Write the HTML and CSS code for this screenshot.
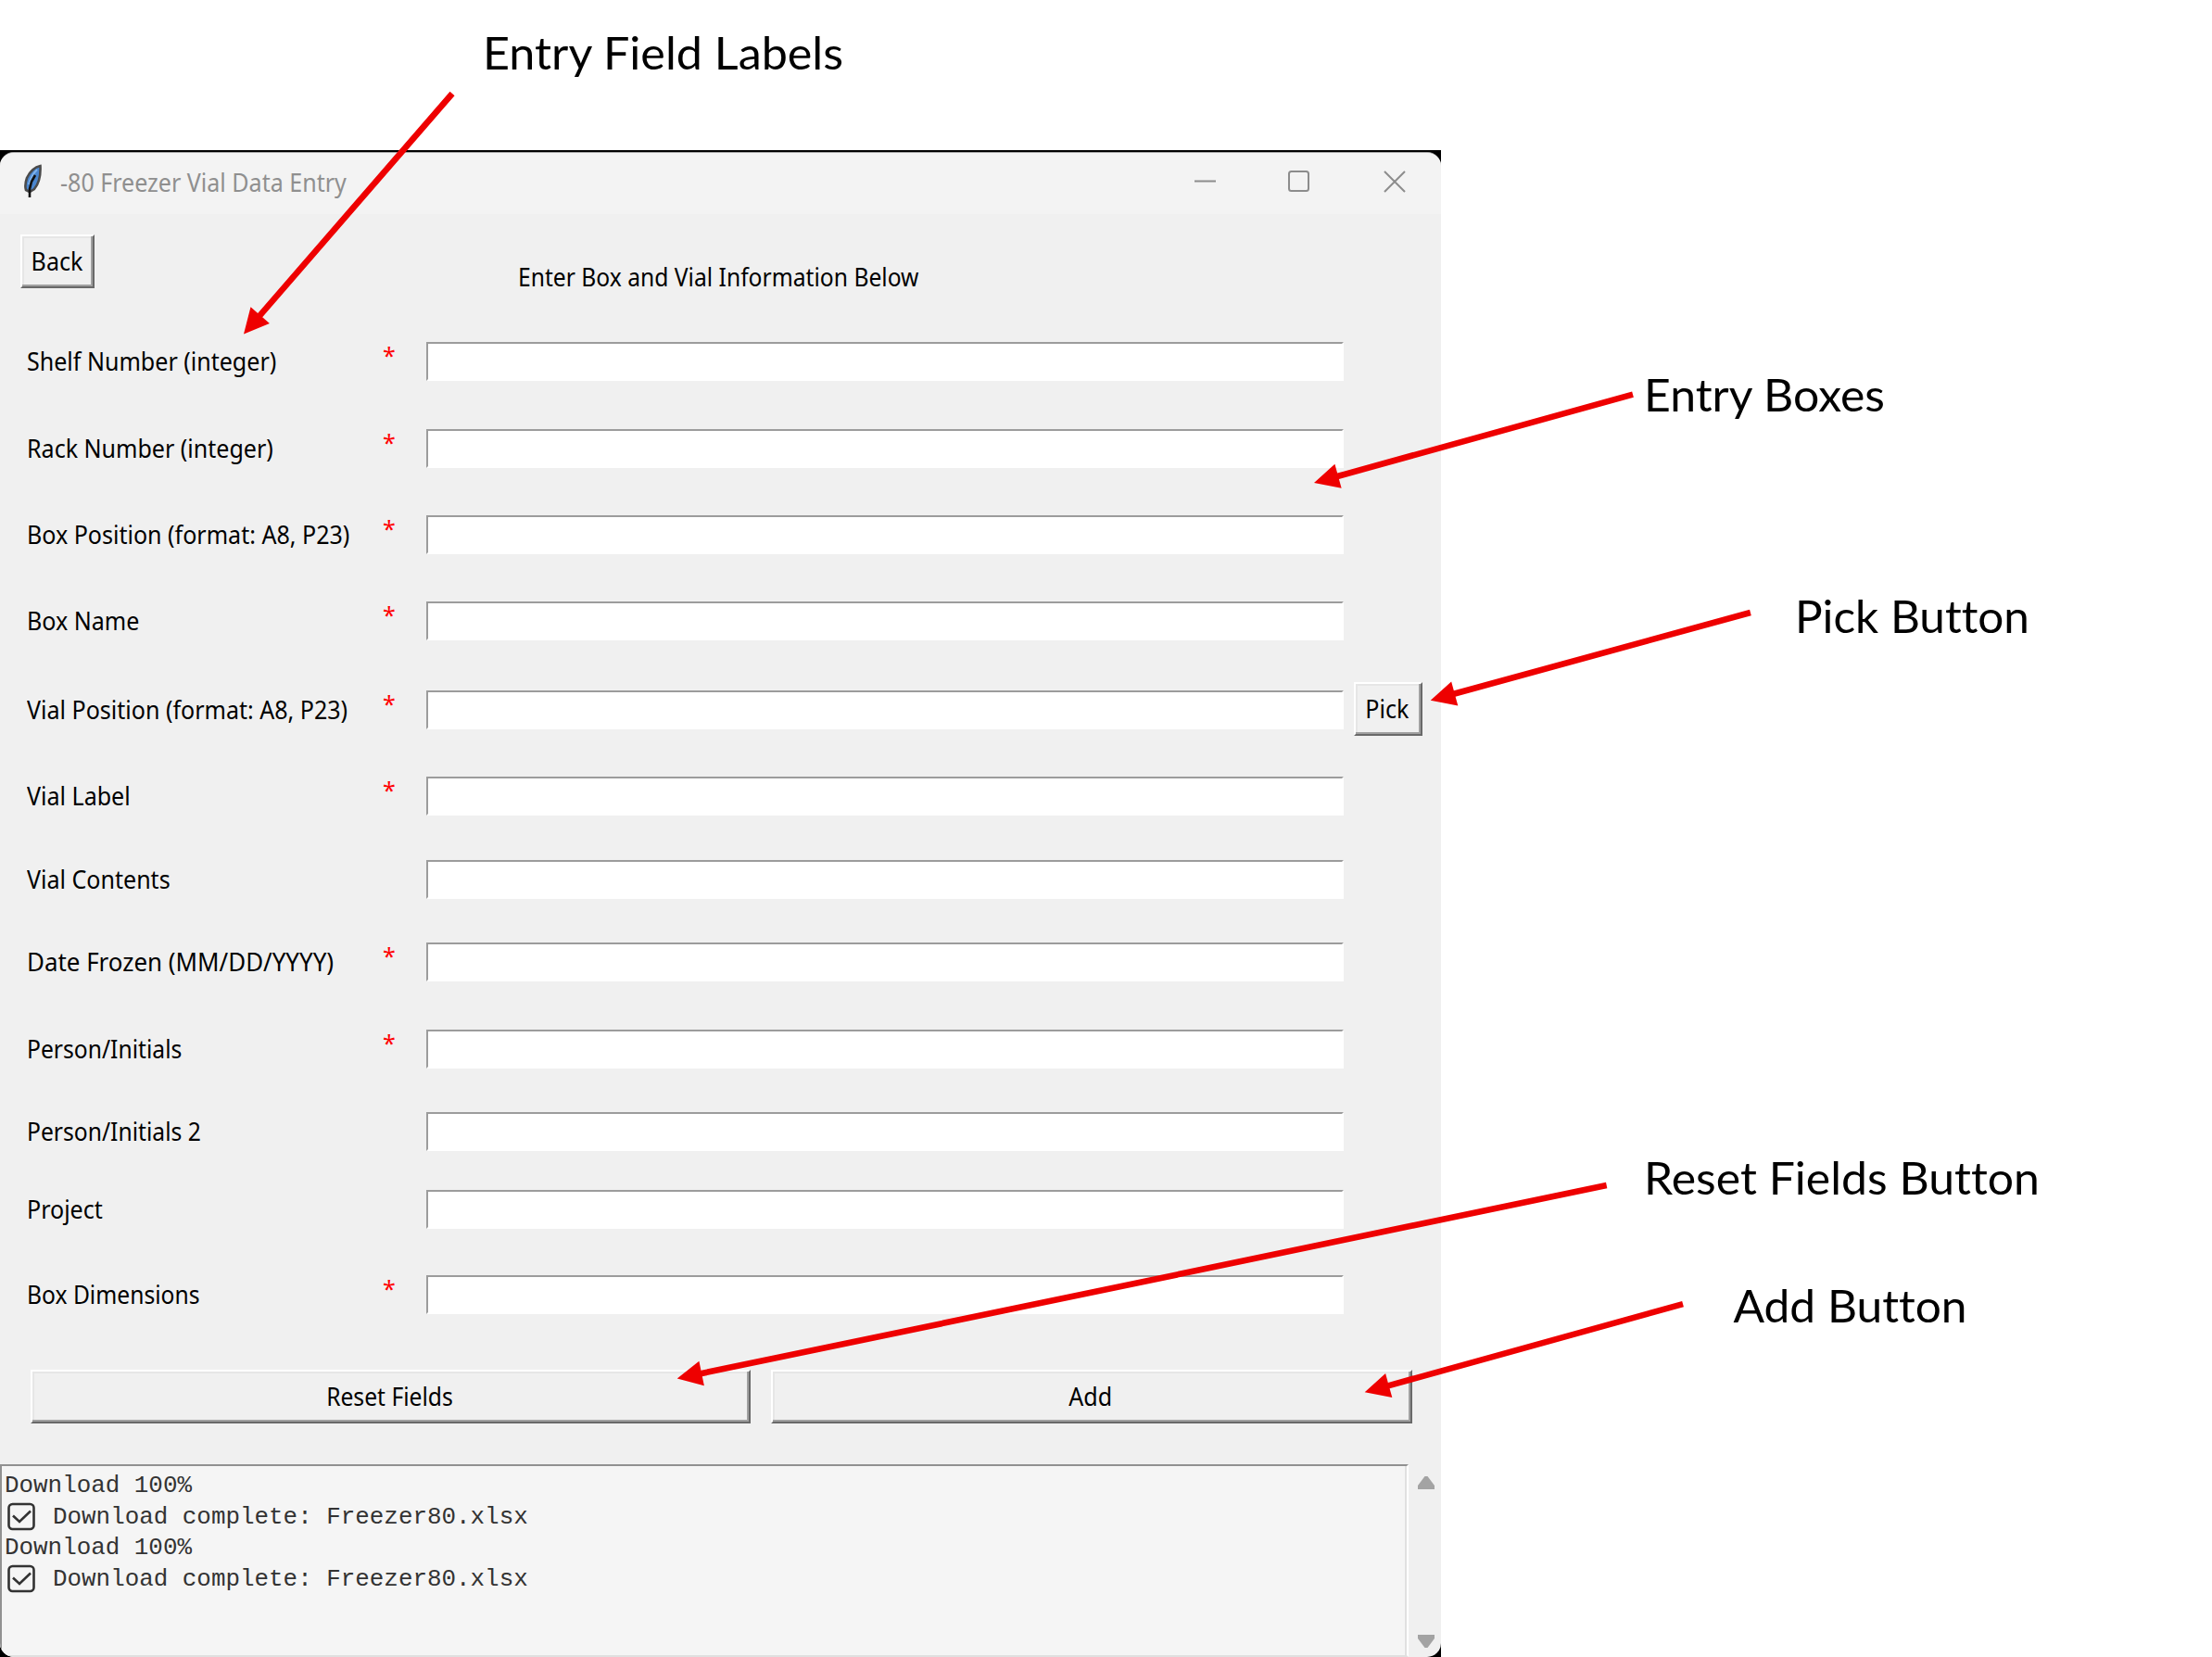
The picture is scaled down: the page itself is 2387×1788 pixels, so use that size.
FILE: index.html
```html
<!DOCTYPE html>
<html lang="en">
<head>
<meta charset="utf-8">
<title>-80 Freezer Vial Data Entry</title>
<link rel="stylesheet" href="styles.css">
</head>
<body>
<div class="backdrop">
<main class="window">
  <header class="titlebar">
    <svg class="feather" width="22" height="38" viewBox="0 0 22 38">
      <path d="M18.500 2C13 3 7 8 4 15C2 21 2 25 3 28L7 30L12 27C17 21 19 12 18.500 2Z" fill="#4a86cf" stroke="#4b4b4b" stroke-width="2.600"/>
      <path d="M15 6C11 10 8 15 6 22" fill="none" stroke="#7fb2ea" stroke-width="2"/>
      <path d="M13 12L9 19L7 27V36" fill="none" stroke="#111" stroke-width="2.600"/>
    </svg>
    <span class="title"><span class="cond">-80 Freezer Vial Data Entry</span></span>
    <svg class="controls" width="230" height="26" viewBox="0 0 230 26" fill="none" stroke="#8c8c8c" stroke-width="2">
      <path d="M1 12.500H24"/>
      <rect x="103" y="2" width="21" height="21" rx="2.500"/>
      <path d="M206 2L228 24M228 2L206 24"/>
    </svg>
  </header>
  <section class="top">
    <button class="btn back"><span class="cond">Back</span></button>
    <h1 class="heading"><span class="cond tight">Enter Box and Vial Information Below</span></h1>
  </section>
  <form class="form">
    <label><span class="cond">Shelf Number (integer)</span></label><i>*</i><input>
    <label><span class="cond">Rack Number (integer)</span></label><i>*</i><input>
    <label><span class="cond">Box Position (format: A8, P23)</span></label><i>*</i><input>
    <label><span class="cond">Box Name</span></label><i>*</i><input>
    <label><span class="cond">Vial Position (format: A8, P23)</span></label><i>*</i><input><button type="button" class="btn pick"><span class="cond">Pick</span></button>
    <label><span class="cond">Vial Label</span></label><i>*</i><input>
    <label><span class="cond">Vial Contents</span></label><input>
    <label><span class="cond wide">Date Frozen (MM/DD/YYYY)</span></label><i>*</i><input>
    <label><span class="cond tight">Person/Initials</span></label><i>*</i><input>
    <label><span class="cond tight">Person/Initials 2</span></label><input>
    <label><span class="cond">Project</span></label><input>
    <label><span class="cond tight">Box Dimensions</span></label><i>*</i><input>
  </form>
  <div class="actions">
    <button class="btn reset"><span class="cond tight">Reset Fields</span></button>
    <button class="btn add"><span class="cond">Add</span></button>
  </div>
  <section class="console">
    <div class="log">
      <p>Download 100%</p>
      <p><svg class="check" width="32" height="32" viewBox="0 0 32 32"><rect x="2.500" y="2" width="27" height="27" rx="4"/><path d="M7 14.500L14 21L26 9.500"/></svg>Download complete: Freezer80.xlsx</p>
      <p>Download 100%</p>
      <p><svg class="check" width="32" height="32" viewBox="0 0 32 32"><rect x="2.500" y="2" width="27" height="27" rx="4"/><path d="M7 14.500L14 21L26 9.500"/></svg>Download complete: Freezer80.xlsx</p>
    </div>
    <div class="scrollbar">
      <svg width="18" height="14" viewBox="0 0 18 14"><path d="M7.500 0H10.500L18 10V14H0V10Z"/></svg>
      <svg width="18" height="14" viewBox="0 0 18 14"><path d="M7.500 14H10.500L18 4V0H0V4Z"/></svg>
    </div>
  </section>
</main>
</div>
<svg class="callouts" width="2387" height="1788" viewBox="0 0 2387 1788">
  <g class="arrows">
    <path transform="translate(263 360.500) rotate(-49.070)" d="M0 0L27 -13.500V-3.300H343.500V3.300H27V13.500Z"/>
    <path transform="translate(1418 521) rotate(-15.500)" d="M0 0L27 -13.500V-3.300H357V3.300H27V13.500Z"/>
    <path transform="translate(1543.700 755.700) rotate(-15.340)" d="M0 0L27 -13.500V-3.300H358V3.300H27V13.500Z"/>
    <path transform="translate(730.700 1487.500) rotate(-11.740)" d="M0 0L27 -13.500V-3.300H1024.400V3.300H27V13.500Z"/>
    <path transform="translate(1472.700 1502.300) rotate(-15.500)" d="M0 0L27 -13.500V-3.300H356.300V3.300H27V13.500Z"/>
  </g>
  <g class="notes">
    <text x="521" y="74.500" textLength="389" lengthAdjust="spacingAndGlyphs">Entry Field Labels</text>
    <text x="1774" y="444" textLength="260" lengthAdjust="spacingAndGlyphs">Entry Boxes</text>
    <text x="1937" y="683" textLength="253" lengthAdjust="spacingAndGlyphs">Pick Button</text>
    <text x="1774" y="1288.500" textLength="427" lengthAdjust="spacingAndGlyphs">Reset Fields Button</text>
    <text x="1870.500" y="1427" textLength="252" lengthAdjust="spacingAndGlyphs">Add Button</text>
  </g>
</svg>
</body>
</html>
```
FILE: styles.css
```css
* { box-sizing: border-box; }
body {
  margin: 0;
  height: 1788px;
  overflow: hidden;
  background: #fff;
  font-family: "Noto Sans", sans-serif;
  font-size: 26.5px;
  color: #000;
}
.backdrop {
  width: 1555px;
  height: 1626px;
  margin-top: 162px;
  padding-top: 2px;
  background: #000;
}
.window {
  display: flex;
  flex-direction: column;
  height: 1624px;
  background: #f0f0f0;
  border-top: 1px solid #a8a8a8;
  border-radius: 15px;
  overflow: hidden;
}
.cond {
  display: inline-block;
  white-space: nowrap;
  transform: scaleX(0.945);
  transform-origin: left center;
}
.cond.tight { transform: scaleX(0.93); }
.cond.wide { transform: scaleX(0.978); }
.titlebar {
  display: flex;
  align-items: flex-start;
  height: 66px;
  padding: 12px 37px 0 25px;
  background: #f3f3f3;
}
.feather { flex: none; }
.title {
  flex: 1;
  margin: 2px 0 0 18px;
  line-height: 36px;
  color: #8f8f8f;
}
.controls { margin-top: 6px; }
.top {
  display: flex;
  height: 138px;
  padding: 22px 0 0 22px;
}
.heading {
  margin: 28px 0 0 457px;
  font-size: inherit;
  font-weight: 400;
  line-height: 36px;
}
.btn {
  flex: none;
  height: 58px;
  padding: 0 2px 0 0;
  font: inherit;
  color: #000;
  background: #f0f0f0;
  border: 2px solid;
  border-color: #fff #696969 #696969 #fff;
  box-shadow: inset -2px -2px #a0a0a0, inset 2px 2px #e6e6e6;
}
.btn .cond { transform-origin: center; }
.back { width: 80px; }
.form {
  display: grid;
  grid-template-columns: 384px 47px 990px 11px 74px;
  grid-template-rows: 94px 93px 93px 96px 93px 90px 89px 94px 89px 84px 92px 42px;
  padding-left: 29px;
  height: 1049px;
  margin: 0;
}
.form label {
  grid-column: 1;
  line-height: 36px;
  padding-top: 3px;
}
.form i {
  grid-column: 2;
  font-style: normal;
  font-size: 25px;
  line-height: 28px;
  color: #f00;
}
.form input {
  grid-column: 3;
  width: 990px;
  height: 42px;
  padding: 0;
  background: #fff;
  border: 2px solid;
  border-color: #9c9c9c #fff #fff #9c9c9c;
  outline: 0;
}
.pick {
  grid-column: 5;
  width: 74px;
  margin-top: -9px;
}
.actions {
  display: flex;
  gap: 22px;
  height: 102px;
  padding: 60px 0 0 33px;
  margin-bottom: 60px;
}
.reset { width: 777px; }
.add { width: 692px; }
.console {
  display: flex;
  height: 208px;
}
.log {
  width: 1520px;
  padding: 5px 0 0 3px;
  background: #f5f5f5;
  border: 2px solid;
  border-color: #919191 #fff #e0e0e0 #919191;
  box-shadow: inset -2px 0 #e0e0e0;
  font-family: "Liberation Mono", monospace;
  font-size: 25.9px;
  color: #333;
}
.log p {
  display: flex;
  height: 33.5px;
  margin: 0;
  line-height: 33.5px;
}
.check {
  margin: 0 18px 0 2px;
  fill: none;
  stroke: #333;
  stroke-width: 2.6;
}
.scrollbar {
  display: flex;
  flex-direction: column;
  justify-content: space-between;
  padding: 13px 0 10px 10px;
  fill: #a3a3a3;
}
.callouts {
  position: absolute;
  left: 0;
  top: 0;
}
.arrows { fill: #ee0000; }
.notes {
  font-family: Lato, sans-serif;
  font-size: 49px;
  font-variant-ligatures: none;
  fill: #000;
}
```
